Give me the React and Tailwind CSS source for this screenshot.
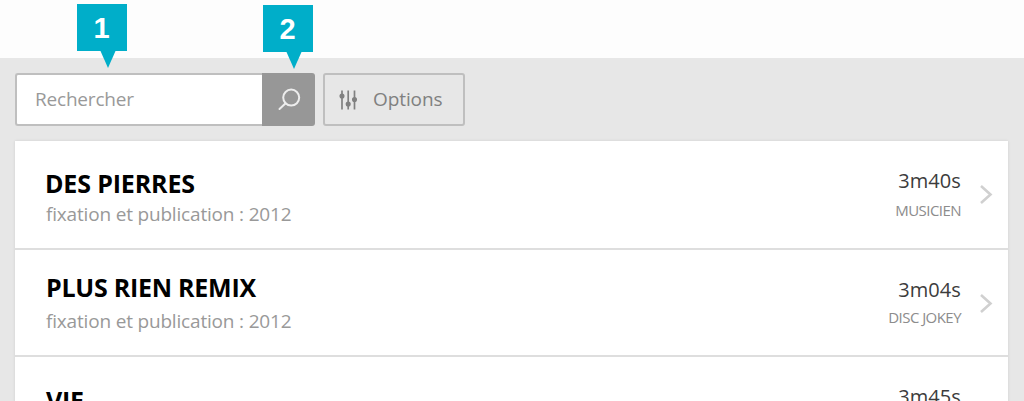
// Track search: toolbar with numbered callouts above the list of recordings
import clsx from 'clsx';

const TRACKS = [
  {
    title: 'DES PIERRES',
    info: 'fixation et publication : 2012',
    duration: '3m40s',
    role: 'MUSICIEN',
    row: 'h-[109px]',
    left: 'pt-[27px]',
    titleClass: 'h-[31px] tracking-[-0.15px]',
    right: 'pt-[26px]',
    roleClass: 'leading-[30px]',
  },
  {
    title: 'PLUS RIEN REMIX',
    info: 'fixation et publication : 2012',
    duration: '3m04s',
    role: 'DISC JOKEY',
    row: 'h-[107px]',
    left: 'pt-[22px]',
    titleClass: 'h-[34px] pl-px tracking-[-0.25px]',
    right: 'pt-[26px]',
    roleClass: 'leading-[27px]',
  },
  {
    title: 'VIE',
    info: 'fixation et publication : 2012',
    duration: '3m45s',
    role: 'MUSICIEN',
    row: 'h-[107px]',
    left: 'pt-[28px]',
    titleClass: 'h-[31px] pl-px tracking-[-0.2px]',
    right: 'pt-[26px]',
    roleClass: 'leading-[30px]',
  },
];

function Callout({ number, className }) {
  return (
    <div className={clsx('absolute w-[50px]', className)}>
      <div className="flex h-[47px] items-center justify-center bg-[#00aec9] pt-px pr-px font-['Liberation_Sans',sans-serif] text-[29px] leading-none font-bold text-white">
        {number}
      </div>
      <svg width="16" height="17" viewBox="0 0 16 17" className="ml-[23px] block fill-[#00aec9]">
        <path d="M.5 0h15L8 17z" />
      </svg>
    </div>
  );
}

function SearchIcon() {
  return (
    <svg width="24" height="24" viewBox="0 0 24 24" fill="none" stroke="#ededed" strokeWidth="2" strokeLinecap="round">
      <circle cx="14.2" cy="9.6" r="8" />
      <path d="M8.6 15.2L2.5 21" />
    </svg>
  );
}

function SlidersIcon() {
  return (
    <svg width="19" height="20" viewBox="0 0 19 20" fill="#808080" stroke="#808080" strokeWidth="1.7">
      <path d="M3 .5v19M9.2 .5v19M15.5 .5v19" />
      <circle cx="3" cy="6" r="1.7" />
      <circle cx="9.2" cy="14" r="1.7" />
      <circle cx="15.5" cy="9.5" r="1.7" />
    </svg>
  );
}

function TrackRow({ track }) {
  return (
    <li className={clsx('flex border-b-2 border-[#dedede] pr-[15px] pl-[30px]', track.row)}>
      <div className={clsx('flex-1', track.left)}>
        <h2 className={clsx('text-[25px] leading-[30px] font-bold whitespace-nowrap text-black', track.titleClass)}>
          {track.title}
        </h2>
        <p className="pl-px text-[19px] leading-[30px] tracking-[-0.18px] text-[#999]">{track.info}</p>
      </div>
      <div className={clsx('text-right', track.right)}>
        <p className="text-[20px] leading-[28px] tracking-[0.1px] text-[#3c3c3c]">{track.duration}</p>
        <p className={clsx('text-[15px] tracking-[-0.55px] text-[#8c8c8c]', track.roleClass)}>{track.role}</p>
      </div>
      <svg width="14" height="21" viewBox="0 0 14 21" className="mt-[43px] ml-[18px]" fill="none" stroke="#d0d0d0" strokeWidth="2.6">
        <path d="M2 2L11.5 10.5L2 19" />
      </svg>
    </li>
  );
}

export default function App() {
  return (
    <div className="relative h-[401px] w-[1024px] overflow-hidden bg-[#e7e7e7] font-['Open_Sans',sans-serif]">
      <div className="h-[58px] bg-[#fdfdfd]" />

      <div className="flex gap-2 px-[15px] pt-[15px]">
        <div className="flex h-[53px] w-[300px]">
          <input
            type="text"
            placeholder="Rechercher"
            className="w-[247px] rounded-l-[3px] border-2 border-r-0 border-[#bfbfbf] bg-white pl-[18px] text-[19px] tracking-[-0.2px] outline-none placeholder:text-[#999]"
          />
          <button className="flex w-[53px] items-center justify-center rounded-r-[3px] bg-[#979797]">
            <SearchIcon />
          </button>
        </div>
        <button className="flex h-[53px] w-[142px] items-center rounded-[3px] border-2 border-[#bfbfbf] pl-[14px] text-[19px] tracking-[-0.1px] text-[#808080]">
          <SlidersIcon />
          <span className="ml-[15px]">Options</span>
        </button>
      </div>

      <ul className="mt-[15px] mr-[16px] ml-[15px] bg-white shadow-[0_0_3px_rgba(0,0,0,0.1)]">
        {TRACKS.map(track => (
          <TrackRow key={track.title} track={track} />
        ))}
      </ul>

      <Callout number="1" className="top-1 left-[77px]" />
      <Callout number="2" className="top-[5px] left-[263px]" />
    </div>
  );
}
